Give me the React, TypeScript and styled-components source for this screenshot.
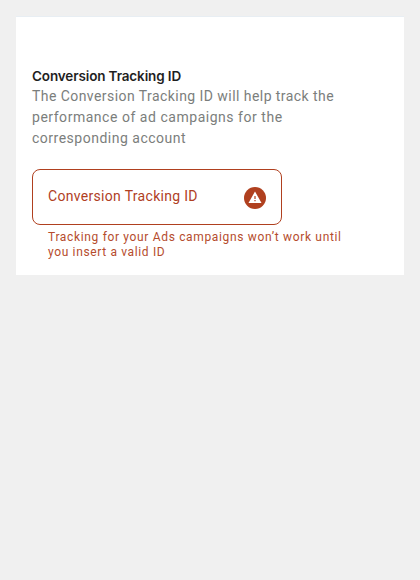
import React from "react";
import styled, { createGlobalStyle } from "styled-components";

const GlobalStyle = createGlobalStyle`
  body {
    margin: 0;
    background: #f0f0f0;
    font-family: Roboto, Inter, sans-serif;
  }
`;

const Page = styled.main`
  padding: 17px 16px;
`;

const Card = styled.section`
  box-sizing: border-box;
  height: 258px;
  padding: 50px 16px 0;
  background: #fff;
  box-shadow: 0 -1px 0 #e8eef3;
`;

const Title = styled.h1`
  margin: 0;
  font-family: Inter, sans-serif;
  font-size: 13.5px;
  line-height: 19px;
  font-weight: 600;
  letter-spacing: -0.13px;
  color: #1f1f1f;
`;

const Line = styled.span<{ $spacing: number }>`
  display: block;
  white-space: nowrap;
  letter-spacing: ${(p) => p.$spacing}px;
`;

const Description = styled.p`
  margin: 0;
  font-size: 14px;
  line-height: 21px;
  color: #7b7e7c;
`;

const Field = styled.div`
  box-sizing: border-box;
  display: flex;
  align-items: center;
  justify-content: space-between;
  width: 250px;
  height: 56px;
  margin-top: 20px;
  padding: 0 15px;
  border: 1px solid #b0401f;
  border-radius: 8px;
  color: #b0401f;
`;

const Label = styled.span`
  font-size: 14px;
  line-height: 20px;
  letter-spacing: 0.31px;
  padding-bottom: 2px;
`;

const Icon = styled.svg`
  display: block;
  width: 22px;
  height: 22px;
  margin-top: 2px;
`;

const Helper = styled.p`
  margin: 5px 0 0 16px;
  font-size: 12px;
  line-height: 15px;
  color: #b54c2d;
`;

export default function App() {
  return (
    <>
      <GlobalStyle />
      <Page>
        <Card>
          <Title>Conversion Tracking ID</Title>
          <Description>
            <Line $spacing={0.44}>The Conversion Tracking ID will help track the</Line>
            <Line $spacing={0.53}>performance of ad campaigns for the</Line>
            <Line $spacing={0.5}>corresponding account</Line>
          </Description>
          <Field>
            <Label>Conversion Tracking ID</Label>
            <Icon viewBox="0 0 22 22" aria-hidden="true">
              <circle cx="11" cy="11" r="11" fill="#b0401f" />
              <path d="M11 4.5 17.5 16H4.5Z" fill="#fff" />
              <path d="M10.4 9h1.2v3h-1.2zM10.4 13h1.2v1.3h-1.2z" fill="#b0401f" />
            </Icon>
          </Field>
          <Helper>
            <Line $spacing={0.66}>Tracking for your Ads campaigns won’t work until</Line>
            <Line $spacing={0.64}>you insert a valid ID</Line>
          </Helper>
        </Card>
      </Page>
    </>
  );
}
